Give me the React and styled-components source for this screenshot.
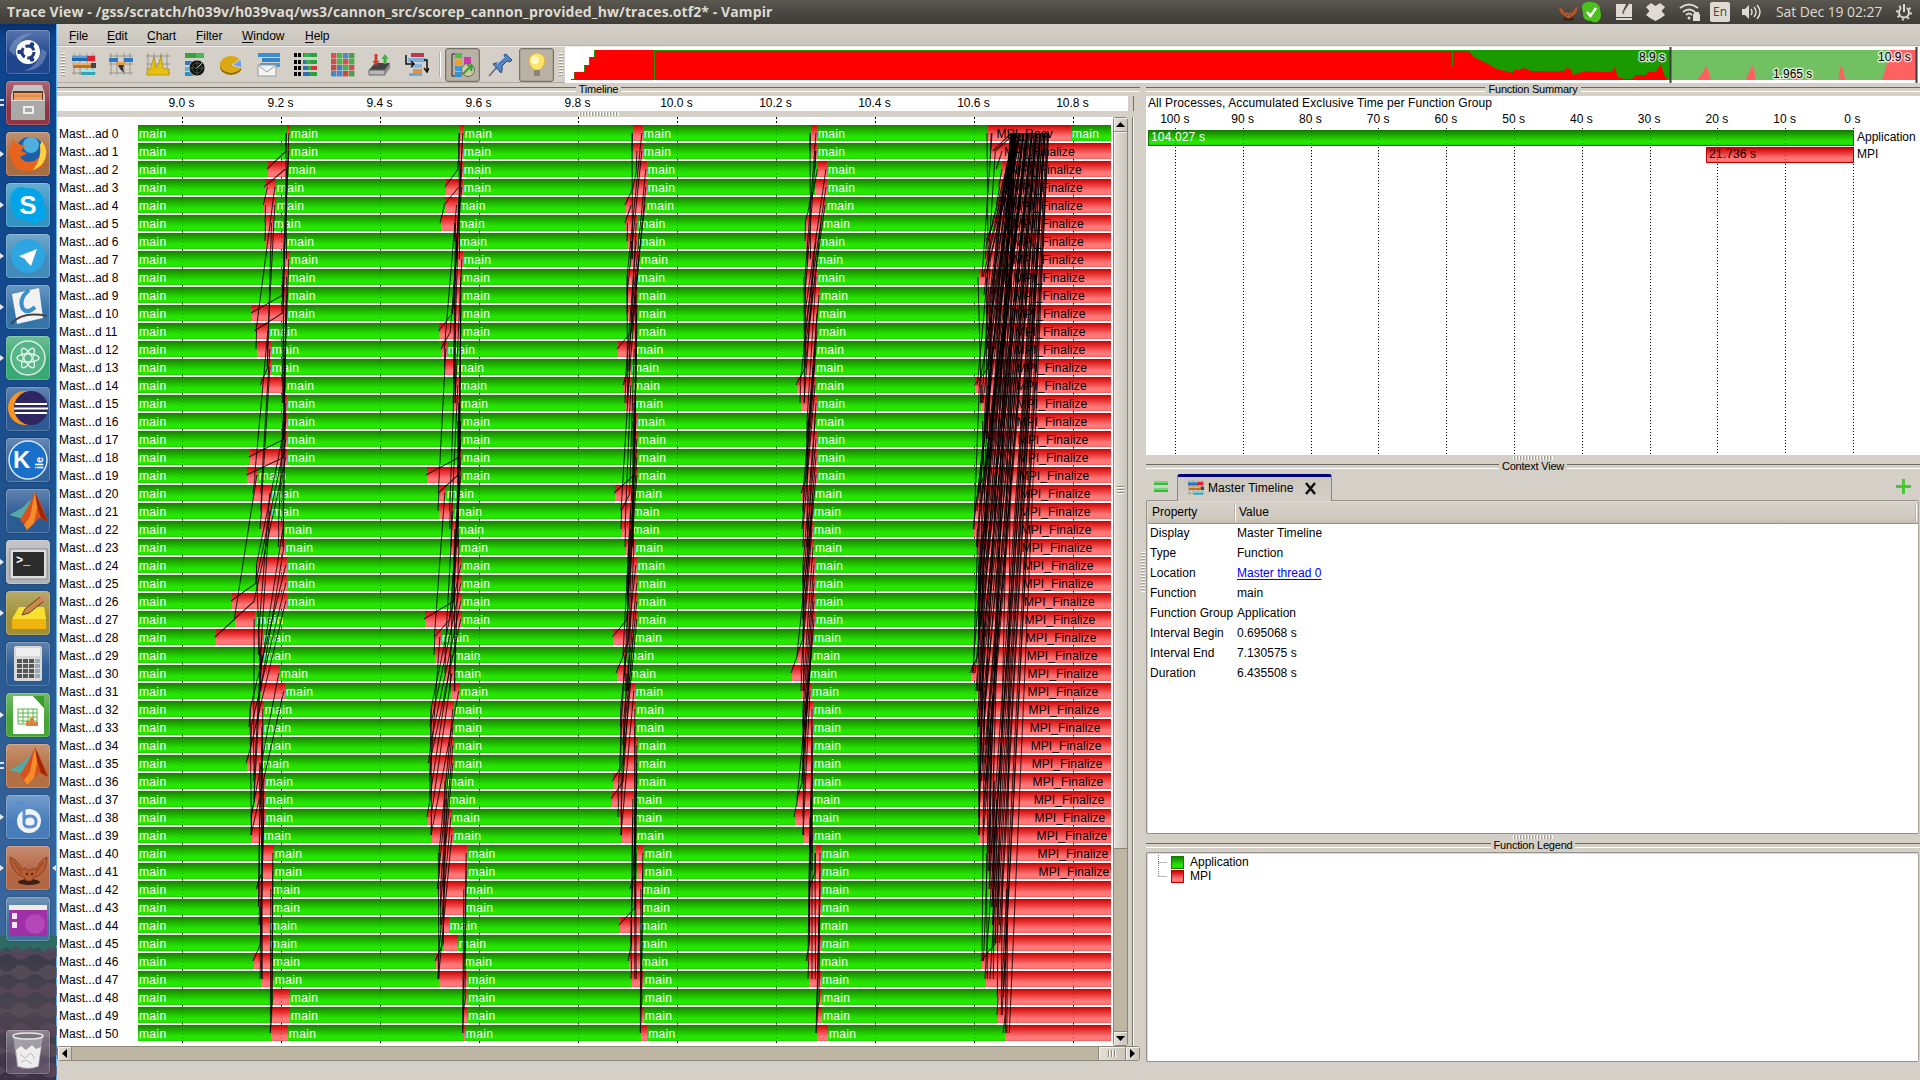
import React from "react";
import styled, { createGlobalStyle, css } from "styled-components";

const Global = createGlobalStyle`
  * { box-sizing: border-box; }
  html, body { margin: 0; padding: 0; }
  body { width: 1920px; height: 1080px; overflow: hidden; background: #d4cfc7;
    font-family: "Liberation Sans", Arial, sans-serif; font-size: 12px; color: #000; }
  svg { display: block; }
`;

/* ---------- trace data ---------- */
const ROWS = 51;
const PLOT_X = 138;
const third = (base, list) => list.map(([s, l]) => [base + s / 3, base + (l - 4.5) / 3]);

const waveA = third(220, [
  [201,214],[200,214],[144,207],[135,172],[133,172],[138,162],[138,202],[197,214],[193,207],[190,207],
  [96,205],[106,151],[111,157],[145,157],[124,202],[190,205],[192,205],[194,205],[90,205],[82,118],
  [102,157],[126,157],[123,196],[178,199],[112,205],[110,205],[36,205],[46,110],[-12,133],[118,133],
  [124,184],[124,199],[93,136],[90,133],[96,133],[81,127],[104,139],[105,139],[96,139],[96,133],
  [128,166],[128,166],[112,160],[118,160],[120,151],[124,151],[102,160],[123,166],[160,214],[157,214],[154,208],
]);
const waveB = third(220, [
  [720,736],[718,733],[716,733],[678,733],[675,717],[663,714],[706,721],[714,733],[708,730],[704,730],
  [700,730],[658,730],[666,685],[676,712],[704,721],[702,724],[722,730],[722,730],[720,730],[621,730],
  [658,682],[657,706],[692,712],[696,724],[706,730],[704,730],[704,730],[615,730],[646,667],[645,702],
  [678,703],[693,724],[636,706],[633,706],[634,706],[628,706],[632,682],[632,687],[624,700],[636,703],
  [658,746],[660,746],[655,739],[664,739],[664,691],[672,718],[648,736],[657,746],[738,746],[732,746],[731,739],
]);
const waveC = third(400, [
  [699,733],[699,733],[712,745],[702,745],[678,742],[678,716],[684,716],[696,724],[684,715],[684,718],
  [684,718],[698,718],[654,710],[690,697],[672,700],[678,709],[702,715],[708,718],[706,718],[704,718],
  [645,706],[666,699],[666,699],[678,709],[686,715],[684,718],[686,718],[684,718],[640,706],[672,682],
  [651,688],[678,709],[665,712],[664,712],[672,718],[672,718],[640,718],[636,706],[657,706],[666,712],
  [710,736],[710,736],[692,730],[708,730],[660,721],[696,721],[687,724],[696,736],[728,736],[725,736],[724,746],
]);
const waveD = Array.from({ length: ROWS }, (_, i) => {
  const s = [811,811,818,815,810,806,806,808,805,806,806,806,806,806,797,801,808,808,808,808,802,804,803,804,804,804,804,804,804,798,792,802,804,804,804,804,803,798,795,804,816,816,810,810,810,810,807,809,820,818,817][i];
  const e = [817,817,827,827,826,822,817,815,817,820,818,818,816,815,816,817,816,817,817,817,814,813,813,814,815,815,815,815,813,812,809,811,813,813,813,813,813,812,811,813,821,821,821,821,820,821,820,821,822,822,828][i];
  return [s, e];
});
const lastStart = [144,154,186,179,172,160,140,139,117,138,142,145,145,147,106,124,138,142,146,133,114,106,102,112,118,119,120,124,118,115,93,112,115,118,124,122,120,120,118,118,142,148,150,158,160,167,126,138,172,174,196].map((v) => 940 + v / 3);
const finalizeX = [172,194,215,218,218,221,221,221,224,224,226,226,226,230,230,232,232,235,235,238,241,241,244,247,250,250,254,256,259,262,265,265,268,271,274,277,280,283,286,292,295,298].map((v) => 940 + (v - 5) / 3);
/* rows whose neighbour message arrives late in the wait interval */
const arrivals = [
  { 2: 286, 3: 268, 10: 283, 18: 285, 19: 255.7, 26: 255 },
  { 3: 459.3, 11: 451.3, 19: 458.6, 27: 450.6 },
  { 4: 631.6, 20: 630.6, 36: 624, 28: 630 },
  {},
];
const waves = [waveA, waveB, waveC, waveD];
const rowY = (i) => 16 + 18 * i;

function messageLines() {
  const out = [];
  const add = (x1, r1, x2, r2) => out.push([x1 - PLOT_X, rowY(r1), x2 - PLOT_X, rowY(r2)]);
  waves.forEach((w, k) => {
    const sender = (i) => (i % 8 === 7 ? i - 7 : i + 1);
    const mid = w.map(([s, e], i) => {
      const from = w[sender(i)];
      return Math.min(e - 1, arrivals[k][i] || Math.max(s, from ? from[0] : s));
    });
    for (let i = 0; i < ROWS; i++) {
      const j = sender(i);
      if (j < ROWS) add(Math.min(w[j][0], mid[i]) - 1, j, mid[i] - 0.5, i);
      if (i + 8 < ROWS) add(Math.min(mid[i + 8], w[i][1]) - 1, i + 8, w[i][1] - 1, i);
    }
  });
  for (let i = 0; i < ROWS; i++) {
    const s = lastStart[i];
    const j = i % 8 === 7 ? i - 7 : i + 1;
    if (j < ROWS) add(Math.min(lastStart[j], s + 6) - 1, j, Math.max(s, lastStart[j]), i);
    if (i + 8 < ROWS) {
      const from = Math.max(lastStart[i + 8], lastStart[Math.min(i + 9, ROWS - 1)] - 4);
      add(from, i + 8, Math.max(s + 4, from + 1), i);
    }
    if (i > 0) {
      const band = i % 2 ? Math.floor(i / 6) * 6 + 3 : i;
      add(s + 4, i, 1013 + band * 0.7, 0);
      if (i % 5 < 2) add(s + 1.5, i, 1010.5 + (i % 8) * 0.8, 0);
      if (i % 4 === 0) add(s + 6, i, 1016 + i * 0.66, 0);
    }
  }
  return out;
}
const LINES = messageLines();
const TICKS = Array.from({ length: 10 }, (_, i) => ({ x: 182.5 + i * 99, label: (9 + i * 0.2).toFixed(1) + " s" }));

/* ---------- styles ---------- */
const greenFill = "linear-gradient(#168200 0%, #1a9600 15%, #20c200 45%, #26e600 72%, #26e600 92%, #20cc00 100%)";
const redFill = "linear-gradient(#cc0000 0%, #d81818 15%, #ee4848 45%, #ff7777 72%, #ff7777 92%, #ee5c5c 100%)";

const Desktop = styled.div`width: 1920px; height: 1080px; display: flex; flex-direction: column; background: #d4cfc7;`;
const TopBar = styled.header`
  height: 24px; flex: none; display: flex; align-items: center; justify-content: space-between;
  padding: 0 8px 0 7px; background: linear-gradient(#5b5850, #4a4842 50%, #3e3d38); color: #dfdbd2;
`;
const WindowTitle = styled.h1`
  margin: 0; font: bold 14px/24px "Open Sans", "Noto Sans", sans-serif; white-space: nowrap; letter-spacing: 0.09px;
`;
const Tray = styled.div`display: flex; align-items: center; height: 24px;`;
const TrayItem = styled.div`width: ${(p) => p.$w}px; margin-right: ${(p) => p.$gap}px; flex: none;`;
const Lang = styled.div`
  width: 20px; height: 20px; margin-right: 12px; border-radius: 2px; background: #dfdbd2; color: #45433d;
  font: 12px/20px "Open Sans", sans-serif; text-align: center;
`;
const Clock = styled.div`width: 107px; margin-right: 13px; font: 14px/24px "Open Sans", sans-serif; letter-spacing: -0.1px; white-space: nowrap;`;

const Body = styled.div`flex: 1; display: flex; min-height: 0;`;
const Launcher = styled.nav`
  width: 57px; flex: none; display: flex; flex-direction: column; align-items: center; padding: 6px 1px 6px 0; gap: 7px;
  border-right: 1px solid #62b4f2; position: relative;
  background: linear-gradient(#07306e 0, #0c448c 14px, #164a8e 300px, #27588f 600px, #3a679d 910px, #2a7068 912px, #2d5f5c 922px, #3c3b4a 930px, #4c4450 990px, #3c3247 1056px);
`;
const Ground = styled.svg`position: absolute; left: 0; bottom: 0;`;
const Tile = styled.div`
  width: 44px; height: 44px; flex: none; border-radius: 4px; position: relative; z-index: 1;
  margin-top: ${(p) => p.$push || "0"};
  background: linear-gradient(rgba(255,255,255,.28), rgba(255,255,255,.04) 60%), ${(p) => p.$bg};
  box-shadow: inset 0 0 0 1px rgba(255,255,255,.22), 0 0 2px rgba(0,0,0,.4);
`;
const Pip = styled.i`
  position: absolute; top: 19px; width: 0; height: 0; border: 3px solid transparent;
  ${(p) => p.$right ? css`right: -6px; border-right: 4px solid #e8e8e8; border-left: 0;` : css`left: -6px; border-left: 4px solid #e8e8e8; border-right: 0;`}
`;
const TwoPips = styled.i`position: absolute; left: -6px; top: 18px; width: 4px; height: 7px; border: solid #dde; border-width: 2px 0;`;

const Workspace = styled.main`flex: 1; display: flex; flex-direction: column; min-width: 0;`;
const MenuBar = styled.div`
  height: 22px; flex: none; display: flex; padding-left: 12px; gap: 18px; line-height: 25px; font-size: 12px;
  background: linear-gradient(#d5d0c9, #cbc6bd); border-bottom: 1px solid #b9b3a8;
`;
const MenuItem = styled.span`letter-spacing: -.05px; width: ${(p) => p.$w}px; white-space: nowrap; u { text-underline-offset: 2px; }`;
const ToolBar = styled.div`height: 37px; flex: none; display: flex; align-items: center; border-top: 1px solid #f2f0ec; border-bottom: 1px solid #b0aca3; padding-left: 4px;`;
const Handle = styled.div`width: 4px; height: 24px; margin-left: ${(p) => p.$ml || 0}px; background: repeating-linear-gradient(#fff 0 1px, #9c978d 1px 2px, #d4cfc7 2px 3px);`;
const Tools = styled.div`display: flex; align-items: center; gap: 13px; width: 370px; padding-left: 7px;`;
const ToolSep = styled.div`width: 2px; height: 25px; margin: 0 4px 0 6px; border-left: 1px solid #b5b0a6; border-right: 1px solid #fff;`;
const ToolBtn = styled.div`
  width: ${(p) => p.$w || 35}px; height: 34px; display: flex; align-items: center; justify-content: center; border-radius: 3px; flex: none;
  ${(p) => p.$on && css`background: #b9b2a4; border: 1px solid #77736a; box-shadow: inset 0 0 0 1px #a8a194;`}
`;
const Overview = styled.div`width: 1355px; height: 36px; margin-left: 2px; background: #fff; flex: none;`;

const Panels = styled.div`flex: 1; display: flex; gap: 6px; min-height: 0; position: relative;`;
const Left = styled.section`width: 1083px; display: flex; flex-direction: column; flex: none;`;
const Right = styled.section`flex: 1; display: flex; flex-direction: column; min-width: 0;`;
const DockTitle = styled.div`
  height: 13px; flex: none; display: flex; align-items: center; gap: 3px; font-size: 11px; line-height: 13px; letter-spacing: -.2px; white-space: nowrap;
  &::before, &::after { content: ""; flex: 1; height: 3px; border-top: 1px solid #6b6862; border-bottom: 1px solid #fff; }
`;
const Axis = styled.div`
  height: 15px; flex: none; width: 1076px; background: #fff; border-right: 5px solid #d4cfc7;
  display: flex; padding-left: 75px; box-shadow: 1px 0 #77736b;
`;
const AxisLabel = styled.span`width: 99px; text-align: center; line-height: 15px; flex: none; white-space: nowrap;`;
const GripRow = styled.div`height: ${(p) => p.$h}px; flex: none; display: flex; justify-content: center; align-items: flex-start; padding-top: 1px;`;
const Grip = styled.div`width: 40px; height: 4px; background: repeating-linear-gradient(90deg, #fff 0 1px, #a39e94 1px 2px, #d4cfc7 2px 3px);`;
const ChartRow = styled.div`height: 929px; flex: none; display: flex; width: 1076px; box-shadow: 1px 0 #fff, inset -1px 0 #77736b;`;
const Chart = styled.div`width: 1056px; background: #fff; position: relative; padding-top: 8px; flex: none;`;
const TraceRow = styled.div`display: flex; height: 16px; margin-bottom: 2px;`;
const RowName = styled.span`width: 81px; padding-left: 2px; line-height: 18px; flex: none; white-space: nowrap;`;
const Track = styled.div`display: flex; width: 973px; overflow: hidden; flex: none;`;
const Seg = styled.div`
  flex: none; height: 16px; line-height: 18px; padding-left: 1px; white-space: nowrap; overflow: visible;
  background: ${(p) => (p.$mpi ? redFill : greenFill)}; color: ${(p) => (p.$mpi ? "#000" : "#fff")};
  letter-spacing: ${(p) => (p.$mpi ? 0.12 : 0.35)}px;
`;
const Overlay = styled.svg`position: absolute; left: 81px; top: 0;`;
const VScroll = styled.div`width: 15px; display: flex; flex-direction: column; background: #bfb6a4; border: 1px solid #8c8779; border-radius: 3px; flex: none;`;
const HScroll = styled.div`height: 15px; display: flex; background: #bfb6a4; border: 1px solid #8c8779; border-radius: 3px; flex: none;`;
const ScrollPart = styled.div`
  width: ${(p) => p.$w}px; height: ${(p) => p.$h}px; display: flex; align-items: center; justify-content: center; flex: none;
  background: linear-gradient(90deg, #e4e0d9, #cbc5b9); box-shadow: inset 1px 1px #f2efea; border: 0 solid #8c8779;
  border-right-width: ${(p) => (p.$r ? 1 : 0)}px; border-left-width: ${(p) => (p.$l ? 1 : 0)}px; border-bottom-width: ${(p) => (p.$b ? 1 : 0)}px; border-top-width: ${(p) => (p.$t ? 1 : 0)}px;
`;
const Trough = styled.div`flex: 1;`;

const Summary = styled.div`height: 359px; flex: none; background: #fff; position: relative; padding: 0 0 0 2px;`;
const SummaryTitle = styled.div`height: 15px; line-height: 14px; letter-spacing: .1px; white-space: nowrap;`;
const SummaryAxis = styled.div`height: 19px; display: flex; margin-left: -7px; line-height: 17px;`;
const SummaryTick = styled.span`width: 67.75px; text-align: center; flex: none;`;
const SummaryBars = styled.div`display: flex; flex-direction: column; gap: 1px;`;
const SummaryRow = styled.div`display: flex; gap: 3px; height: 16px; line-height: 15px;`;
const SummaryTrack = styled.div`width: 706px; display: flex; justify-content: flex-end; flex: none;`;
const SummaryBar = styled.div`
  width: ${(p) => p.$w}px; height: 16px; line-height: 13px; padding-left: 2px; background: ${(p) => (p.$mpi ? redFill : greenFill)};
  color: ${(p) => (p.$mpi ? "#000" : "#fff")}; border: 1px solid ${(p) => (p.$mpi ? "#c00000" : "#127a00")}; letter-spacing: .15px;
`;
const SummaryGrid = styled.svg`position: absolute; left: 0; top: 30px;`;

const Tabs = styled.div`height: 26px; flex: none; display: flex; align-items: flex-end; margin-top: 1px;`;
const TabIcon = styled.div`width: 31px; padding-left: 8px; height: 20px;`;
const Tab = styled.div`
  width: 155px; height: 27px; margin-bottom: -1px; display: flex; align-items: center; gap: 4px; padding: 0 0 2px 10px; position: relative; z-index: 1;
  border: 1px solid #8c8779; border-top: 3px solid #000080; border-bottom: 0; border-radius: 3px 3px 0 0; background: linear-gradient(#cdc7bd, #d4cfc7);
`;
const TabText = styled.span`width: 92px; white-space: nowrap; letter-spacing: .05px;`;
const AddTab = styled.div`margin-left: auto; padding-right: 9px; height: 21px;`;
const Sheet = styled.div`
  height: ${(p) => p.$h}px; flex: none; background: #fff; border: 1px solid #96928a; border-right-color: #a8a49b; box-shadow: inset 1px 1px #dedad3;
  border-radius: 2px; margin-right: 1px; display: flex; flex-direction: column; padding: ${(p) => p.$pad || "1px 0 0 1px"};
`;
const HeadRow = styled.div`
  height: 22px; flex: none; display: grid; grid-template-columns: 87px 1fr; align-items: center;
  background: linear-gradient(#d6d1ca, #d0cac0 75%, #c3bcae); border-bottom: 1px solid #9a9384;
`;
const HeadCell = styled.span`padding-left: 4px; height: 18px; line-height: 17px; border-right: 1px solid #b8b2a6; box-shadow: 1px 0 #fff; &:last-child { margin-right: 2px; }`;
const PropRow = styled.div`height: 20px; display: grid; grid-template-columns: 87px 1fr; line-height: 19px; padding-left: 2px; white-space: nowrap; letter-spacing: .03px;`;
const Link = styled.a`color: #0000ff; text-decoration: underline; text-underline-offset: 2px;`;
const LegendRow = styled.div`display: flex; align-items: center; height: 14px; gap: 6px; padding-left: 10px; line-height: 13px;`;
const Branch = styled.svg`flex: none; margin-right: -5px;`;
const Swatch = styled.i`width: 13px; height: 13px; flex: none; background: ${(p) => (p.$mpi ? redFill : greenFill)}; border: 1px solid ${(p) => (p.$mpi ? "#c00000" : "#127a00")};`;
const SideGrip = styled.div`position: absolute; left: 1084px; top: 469px; width: 4px; height: 40px; background: repeating-linear-gradient(#fff 0 1px, #a39e94 1px 2px, #d4cfc7 2px 3px);`;

/* ---------- drawings ---------- */
const Grid = () => <path d="M2 0V22M8 0V22M15 0V22M21 0V22M0 3H24M0 11H24M0 20H24" stroke="#8d8982" strokeWidth=".8" />;
const R = (x, y, w, h, f) => <rect key={`${x},${y},${f}`} x={x} y={y} width={w} height={h} fill={f} />;
const Ico = ({ children, s = 24 }) => <svg width={s} height={s} viewBox="0 0 24 24" fill="none">{children}</svg>;
const TimelineIcon = ({ s = 24 }) => <Ico s={s}><Grid />{R(0,3,15,5,"#2167ab")}{R(0,3,15,2,"#5aa0dc")}{R(15,3,8,5,"#e02030")}{R(1,10,18,5,"#c07020")}{R(1,10,18,2,"#eab060")}{R(19,10,5,5,"#444")}{R(9,17,14,5,"#35a5b5")}{R(9,17,14,2,"#8fe8ee")}</Ico>;
const ProcIcon = () => <Ico><Grid />{R(0,5,9,4,"#2d78c4")}{R(15,5,9,4,"#2d78c4")}{R(8,9,9,3,"#e5a04a")}<path d="M9 12h6l-1 3 1 5-4-4z" fill="#333" /></Ico>;
const CounterIcon = () => <Ico><Grid /><path d="M1 22V15l3 2 2-7 2-6 2 11 3-5 2-8 2 13 3 1 3 0v6z" fill="#e5c010" stroke="#9c7d00" strokeWidth=".6" /></Ico>;
const RadarIcon = () => <Ico>{R(2,0,11,5,"#3ca040")}{R(13,0,8,5,"#48b850")}{R(2,8,10,4,"#2d78c4")}{R(2,14,7,4,"#60b0d8")}{R(2,19,8,4,"#2c90c0")}<circle cx="14" cy="15" r="8" fill="#111" stroke="#ccc" strokeWidth=".8" /><circle cx="14" cy="15" r="5" stroke="#587858" strokeWidth=".6" /><path d="M14 15L20 9" stroke="#b8d8b8" strokeWidth="1" /><path d="M7 15h14M14 8v14" stroke="#587858" strokeWidth=".6" /></Ico>;
const PieIcon = () => <Ico><ellipse cx="11" cy="13.500" rx="11" ry="8.500" fill="#8f6a00" /><ellipse cx="11" cy="11.500" rx="11" ry="8.500" fill="#dca914" /><path d="M12 12L21 6l1 9z" fill="#6f9ff0" stroke="#eee" strokeWidth=".7" /></Ico>;
const MailIcon = () => <Ico>{R(1,0,22,4,"#3e8fd0")}{R(5,5,18,4,"#3584c8")}{R(3,10,20,4,"#4a9ad8")}<rect x="1" y="12" width="18" height="11" fill="#f4f4f4" stroke="#999" /><path d="M1 12l9 7 9-7" stroke="#999" /></Ico>;
const MatrixIcon = () => <Ico>{[0,7,13,19].map((y, i) => <g key={y}>{R(0,y,3,4,"#000")}{R(4,y,3,4,"#000")}{R(9,y,9,4,"#35b050")}{R(17,y,6,4,i === 2 ? "#e03030" : "#2aa040")}{R(9,y,i * 2 + 1,4,"#3070b0")}</g>)}</Ico>;
const CommIcon = () => <Ico>{["#d85050","#48b848","#5088c8","#48a048","#c85050","#48b848","#d85050","#48b048","#c84848","#4880c0","#48b048","#d05050","#4888c8","#4888c8","#c84848","#48a048"].map((c, i) => R((i % 4) * 6, Math.floor(i / 4) * 6, 5.4, 5.4, c))}</Ico>;
const IoIcon = () => <Ico><path d="M1 17l6-7h15l-5 7z" fill="#444" /><path d="M1 17h16v5H1z" fill="#b8b8b8" stroke="#666" /><path d="M17 17l5-7v5l-5 7z" fill="#888" /><path d="M8 1v8" stroke="#d04030" strokeWidth="3" /><path d="M4.500 8h7L8 13z" fill="#d04030" /><path d="M17 11V5" stroke="#40b040" strokeWidth="3" /><path d="M13.500 6h7L17 1z" fill="#40b040" /></Ico>;
const TreeIcon = () => <Ico>{R(6,0,13,4,"#c03850")}{R(3,5,18,4,"#7ab0d8")}{R(6,11,11,4,"#80b8e0")}{R(8,16,9,4,"#e09040")}{R(4,20,13,3,"#70a8d8")}<path d="M1 2v9h8M19 7h3v11M19 15l3 4 2-4M6 8l3 3-3 3" stroke="#111" strokeWidth="1.500" /></Ico>;
const ClusterIcon = () => <Ico><path d="M4 1H1v22h3M4 11h3" stroke="#222" />{R(4,0,7,5,"#58b848")}{R(4,7,7,5,"#f0a020")}{R(4,13,7,5,"#4098d8")}{R(4,19,7,5,"#3890d0")}{R(13,4,7,7,"#c838a8")}<circle cx="17" cy="17" r="6.500" fill="#cfc8a8" stroke="#6d6a50" /><path d="M12 21l8-8M16 12l5 1-1 5" stroke="#28a828" strokeWidth="2" /></Ico>;
const PinIcon = () => <Ico><path d="M1 23l9-10" stroke="#667" strokeWidth="1.500" /><path d="M5 11q4-2 7-1l5-5-1-3 2-1 6 6-2 2-3-1-5 5q1 4-1 7z" fill="#5584c0" stroke="#2a4c80" /><path d="M9 11l8-7" stroke="#9cc0ea" strokeWidth="1.500" /></Ico>;
const BulbIcon = () => <Ico><path d="M12 0a8 8 0 0 1 8 8q0 4-5 9H9Q4 12 4 8a8 8 0 0 1 8-8z" fill="#ffe36a" stroke="#d8b020" strokeWidth=".8" /><circle cx="10" cy="7" r="4" fill="#fff8c0" />{R(9,17,6,6,"#8a8578")}</Ico>;

const OverviewChart = () => (
  <svg width="1355" height="36" viewBox="565 47 1355 36">
    <path d="M571 80V79h3V72h10v-7h5v-8h5V50H1916V80z" fill="#1b9a00" />
    <path d="M571 80V79h3.500V72H585v-7h5v-8h5V50H654V51H1469L1474 57L1480 60L1488 64L1495 68L1500 70L1506 71L1513 73L1514 70H1519L1523 68L1532 71L1553 71.500L1565 70.500L1566 68L1571 69L1573 75L1578 73L1588 71L1600 72L1612 71.500L1615 67L1617.600 77L1625 79H1632L1636 75H1646L1648 72L1656 71.500L1661 64L1664 75L1667 78V80z" fill="#f00" />
    <path d="M1697 80l6-8 3-6 2 3 3 11zM1745.500 80l4-9 3-6 2 6 1 9zM1791 80l5-6 1.500-10 1 6 2 10zM1838.500 80l2-14 2 2 3 12zM1882 80l1-4 6-18 1-8h26v30z" fill="#f00" />
    <path d="M654.500 50V80M1452.500 50V66" stroke="#1b9a00" />
    <rect x="1671" y="50" width="245" height="30" fill="#fff" opacity=".38" />
    <path d="M1670.500 47V83M1916.500 47V83" stroke="#3d3d3d" strokeWidth="2" />
    <g fontFamily="Liberation Sans" fontSize="12" stroke="#fff" strokeOpacity=".7" strokeWidth="3" paintOrder="stroke" strokeLinejoin="round">
      <text x="1639" y="61">8.9 s</text><text x="1878" y="61">10.9 s</text><text x="1773" y="78">1.965 s</text>
    </g>
  </svg>
);

const Matlab = () => <svg width="44" height="44"><path d="M3 26l13-7 9-9-6 22-5-3z" fill="#55aaa5" /><path d="M14 31l9-15 6-13 5 10 8 19-9-3-7 7-5 5-3-6z" fill="#d8501a" /><path d="M29 3l3 12-4 19-7 7-3-5 6-8z" fill="#ffa030" opacity=".75" /><path d="M29 3l5 12 8 18-7-4-4-12z" fill="#a02808" /></svg>;
const Vampir = () => <svg width="44" height="44"><ellipse cx="23" cy="36" rx="11" ry="3" fill="#3a2015" /><path d="M4 11q8 3 12 13l3-2 4 3 4-3 3 2q4-10 11-13 1 12-9 19l-4 1q-1 4-5 4t-5-4l-5-2Q4 22 4 11z" fill="#b85c32" stroke="#8a4020" /><path d="M8 16l8 12M37 16l-8 12" stroke="#8a4020" /><circle cx="21" cy="28" r="1.200" fill="#5a2010" /><circle cx="26" cy="28" r="1.200" fill="#5a2010" /></svg>;
const icons = [
  ["#173f8c", <svg width="44" height="44"><path d="M3 20Q8 3 29 3Q12 7 9 26M41 22Q38 40 18 41Q34 35 35 19" fill="#8fa3c8" opacity=".5" /><circle cx="22" cy="22" r="12" fill="#fff" /><circle cx="22" cy="22" r="6" fill="none" stroke="#1b3a80" strokeWidth="3" strokeDasharray="10 2.500" /><circle cx="13.500" cy="22" r="2.300" fill="#1b3a80" /><circle cx="26" cy="14.500" r="2.300" fill="#1b3a80" /><circle cx="26" cy="29.500" r="2.300" fill="#1b3a80" /></svg>, 0],
  ["#8c2c3c", <svg width="44" height="44"><path d="M8 4h28l3 10v25H5V14z" fill="#c4c4c2" /><rect x="7" y="10" width="30" height="10" fill="#6b3a20" /><path d="M8 12h28v8H8z" fill="#f0a060" /><path d="M8 15h28" stroke="#c87838" /><rect x="5" y="19" width="34" height="20" fill="#a9a9a7" /><path d="M5 19.500h34" stroke="#ddd" /><rect x="18" y="26" width="9" height="6" fill="none" stroke="#eee" strokeWidth="2" /></svg>, 2],
  ["#a5673c", <svg width="44" height="44"><circle cx="24" cy="20" r="15" fill="#1d5fa8" /><circle cx="25" cy="13" r="8" fill="#4fb0e0" /><path d="M7 7Q2 18 5 27Q9 39 22 39Q37 39 40 25Q42 15 37 9Q38 24 28 29Q17 32 14 24Q18 25 21 21L15 19Q17 15 20 14Q14 13 12 11Q8 10 7 7z" fill="#e8641c" /><path d="M36 9Q44 20 37 31Q33 36 27 38Q36 27 34 13z" fill="#ffd040" /></svg>, 1],
  ["#2b8fc0", <svg width="44" height="44"><path d="M6 10Q10 2 20 5Q38 5 38 22Q44 36 32 39Q26 42 20 37Q5 36 6 22Q3 16 6 10" fill="#00a4e8" /><text x="22" y="31" textAnchor="middle" fontFamily="Liberation Sans" fontWeight="bold" fontSize="26" fill="#fff">S</text></svg>, 1],
  ["#3a86b8", <svg width="44" height="44"><circle cx="22" cy="22" r="17" fill="#2ca5e0" /><path d="M13 22l18-7-6 17-4-4-2-3z" fill="#fff" /></svg>, 1],
  ["#2c6fa8", <svg width="44" height="44"><path d="M6 9l27-6 4 30-26 6z" fill="#f2f2f2" /><path d="M23 5Q12 14 17 24Q22 29 29 22" fill="none" stroke="#3c8fc8" strokeWidth="4" /><path d="M5 39Q16 26 41 31" fill="none" stroke="#444" strokeWidth="2" /></svg>, 1],
  ["#2fa56c", <svg width="44" height="44"><circle cx="22" cy="22" r="17" fill="#57b58a" stroke="#d8efe0" strokeWidth="1.500" /><g fill="none" stroke="#e8f8f0" strokeWidth="1.300"><ellipse cx="22" cy="22" rx="11" ry="4" /><ellipse cx="22" cy="22" rx="11" ry="4" transform="rotate(60 22 22)" /><ellipse cx="22" cy="22" rx="11" ry="4" transform="rotate(120 22 22)" /></g></svg>, 1],
  ["#24548f", <svg width="44" height="44"><circle cx="19" cy="21" r="17" fill="#f7941e" /><circle cx="25" cy="21" r="17" fill="#2f2560" /><path d="M9 17h32M8 21.500h34M9 26h32" stroke="#fff" strokeWidth="2" /></svg>, 0],
  ["#2a5c98", <svg width="44" height="44"><circle cx="22" cy="22" r="19" fill="#1a6fc8" stroke="#d8e8f8" strokeWidth="1.500" /><text x="7" y="30" fontFamily="Liberation Sans" fontWeight="bold" fontSize="24" fill="#fff">K</text><text transform="translate(37 31) rotate(-90)" fontFamily="Liberation Sans" fontWeight="bold" fontSize="11" fill="#fff">ile</text></svg>, 0],
  ["#24548f", <Matlab />, 0],
  ["#aeb0b4", <svg width="44" height="44"><rect x="4" y="9" width="37" height="30" fill="#ddd" stroke="#888" /><rect x="7" y="12" width="31" height="24" fill="#2c2c2c" /><text x="10" y="24" fontFamily="Liberation Mono" fontWeight="bold" fontSize="12" fill="#fff">&gt;_</text></svg>, 1],
  ["#9c8a30", <svg width="44" height="44"><path d="M6 29l7-13h25l2 13v9H6z" fill="#f0b410" /><path d="M6 28l7-12h25l2 12z" fill="#f8e030" /><path d="M16 24l3-6 15-12 4 4-15 12z" fill="#c88a48" stroke="#604020" /><path d="M34 6l3-1 2 4-2 2z" fill="#e08080" /></svg>, 1],
  ["#24548f", <svg width="44" height="44"><rect x="8" y="4" width="28" height="35" rx="2" fill="#d8d8d6" /><rect x="10" y="6" width="24" height="8" fill="#eee" />{[0,1,2,3].map((r) => [0,1,2,3].map((c) => <rect key={`${r}${c}`} x={11 + c * 6} y={17 + r * 5} width="5" height="4" fill={c === 3 ? "#9ab" : "#555"} />))}</svg>, 0],
  ["#3fa02f", <svg width="44" height="44"><path d="M7 3h20l11 12v26H7z" fill="#fff" /><path d="M27 3h11v12z" fill="#38a028" /><g stroke="#58b848" fill="none"><rect x="12" y="16" width="19" height="15" /><path d="M12 20h19M12 24h19M12 28h19M17 16v15M22 16v15M27 16v15" /></g><path d="M20 33v-5h4v5M24 33v-8h4v8M28 33v-4h4v4" fill="#e08040" /></svg>, 1],
  ["#b06a3c", <Matlab />, 2],
  ["#3f78b8", <svg width="44" height="44"><circle cx="23" cy="26" r="12" fill="#f0f4f8" /><path d="M8 11q9-7 10 0v17q0 4 6 4t6-5q0-6-6-6-5 0-6 4" fill="none" stroke="#5a90d0" strokeWidth="3" /></svg>, 1],
  ["#b0603c", <Vampir />, 3],
  ["#3a6a98", <svg width="44" height="44"><rect x="3" y="8" width="38" height="31" rx="2" fill="#a030a8" /><circle cx="29" cy="27" r="10" fill="#c860c8" opacity=".5" /><rect x="3" y="8" width="38" height="5" fill="#f0ece0" /><rect x="6" y="16" width="5" height="6" fill="#f4e8f8" /><rect x="6" y="25" width="5" height="6" fill="#f4e8f8" /></svg>, 0],
];

const Arrow = ({ d }) => <svg width="9" height="9" viewBox="0 0 9 9"><path d={d} fill="#000" /></svg>;

function Row({ i }) {
  const parts = [];
  let x = PLOT_X;
  waves.forEach((w) => {
    parts.push([0, w[i][0] - x, "main"]);
    parts.push([1, w[i][1] - w[i][0], ""]);
    x = w[i][1];
  });
  parts.push([0, lastStart[i] - x, "main"]);
  x = lastStart[i];
  if (i === 0) {
    parts.push([1, finalizeX[0] - x, ""], [1, 1071 - finalizeX[0], "MPI_Recv"], [0, 40.4, "main"]);
  } else if (finalizeX[i]) {
    parts.push([1, finalizeX[i] - x, ""], [1, 1111.3 - finalizeX[i], "MPI_Finalize"]);
  } else parts.push([1, 1111.3 - x, ""]);
  return (
    <TraceRow>
      <RowName>{`Mast...${i < 10 ? "ad" : "d"} ${i}`}</RowName>
      <Track>{parts.map(([m, w, t], k) => <Seg key={k} $mpi={!!m} style={{ width: w }}>{t}</Seg>)}</Track>
    </TraceRow>
  );
}

const MENU = [["File", 20], ["Edit", 22], ["Chart", 31], ["Filter", 28], ["Window", 45], ["Help", 26]];
const PROPS = [["Display", "Master Timeline"], ["Type", "Function"], ["Location", "Master thread 0"], ["Function", "main"], ["Function Group", "Application"], ["Interval Begin", "0.695068 s"], ["Interval End", "7.130575 s"], ["Duration", "6.435508 s"]];

export default function App() {
  return (
    <Desktop>
      <Global />
      <TopBar>
        <WindowTitle>Trace View - /gss/scratch/h039v/h039vaq/ws3/cannon_src/scorep_cannon_provided_hw/traces.otf2* - Vampir</WindowTitle>
        <Tray>
          <TrayItem $w={22} $gap={2}><svg width="22" height="22" viewBox="0 0 44 44"><Vampir /></svg></TrayItem>
          <TrayItem $w={21} $gap={14}><svg width="21" height="22"><path d="M2 3Q6 0 10 1Q19 1 19 9Q22 18 16 21Q12 22 10 20Q1 20 2 11Q0 6 2 3" fill="#4cc01c" /><path d="M6 11l3.500 4L15 7" stroke="#fff" strokeWidth="2.500" fill="none" /></svg></TrayItem>
          <TrayItem $w={16} $gap={14}><svg width="17" height="18"><path d="M0 1h10l-4 9 2 1 6-10h2v13H0z" fill="#dfdbd2" /><path d="M0 15h16v2H0z" fill="#dfdbd2" /><path d="M8 10l6-9" stroke="#dfdbd2" strokeWidth="1.500" /></svg></TrayItem>
          <TrayItem $w={19} $gap={14}><svg width="19" height="18"><path d="M5 0l4.500 3L14 0l5 4-3.500 4L19 12l-4 3-5.500 3L4 15l-4-3 3.500-4L0 4z" fill="#dfdbd2" /></svg></TrayItem>
          <TrayItem $w={21} $gap={10}><svg width="21" height="18"><path d="M1 5Q10-2 19 5M4 9q6-5 12 0M7 12q3-3 6 0" fill="none" stroke="#dfdbd2" strokeWidth="1.800" /><circle cx="10" cy="15" r="1.500" fill="#dfdbd2" /><path d="M14 11h7v7h-7zM15 11V9h5v2" fill="#dfdbd2" /></svg></TrayItem>
          <Lang>En</Lang>
          <TrayItem $w={20} $gap={14}><svg width="20" height="16"><path d="M0 5h3l4-4v14l-4-4H0z" fill="#dfdbd2" /><path d="M9 5q2 3 0 6M12 3q4 5 0 10M15 1q6 7 0 14" fill="none" stroke="#dfdbd2" strokeWidth="1.500" /></svg></TrayItem>
          <Clock>Sat Dec 19 02:27</Clock>
          <TrayItem $w={16} $gap={0}><svg width="16" height="18"><circle cx="8" cy="9.500" r="5" fill="none" stroke="#dfdbd2" strokeWidth="2" /><circle cx="8" cy="9.500" r="7" fill="none" stroke="#dfdbd2" strokeWidth="2" strokeDasharray="2 3.500" /><path d="M8 0v9" stroke="#4a4842" strokeWidth="5" /><path d="M8 1v8" stroke="#dfdbd2" strokeWidth="2" /></svg></TrayItem>
        </Tray>
      </TopBar>
      <Body>
        <Launcher>
          <Ground width="57" height="146">{[14, 34, 52, 72, 92, 112, 132].map((y, i) => <path key={y} d={`M0 ${y}q7 7 14 0t14 0t14 0t15 0v9q-8 6-15 0t-14 0t-14 0t-14 0z`} fill={i % 2 ? "#5a5058" : "#5c4a5c"} opacity=".7" />)}<path d="M0 2h57v9l-4 5-4-4-5 6-5-5-5 3-6-4-6 5-6-6-5 5-5-3-6 3z" fill="#2c6a62" /></Ground>
          {icons.map(([bg, el, pip], i) => (
            <Tile key={i} $bg={bg}>
              {el}
              {(pip === 1 || pip === 3) && <Pip />}
              {pip === 3 && <Pip $right />}
              {pip === 2 && <TwoPips />}
            </Tile>
          ))}
          <Tile $bg="rgba(120,110,130,.35)" $push="auto">
            <svg width="44" height="44"><path d="M7 5h30l-4 32q-11 4-22 0z" fill="#c8c8cc" opacity=".55" /><ellipse cx="22" cy="6" rx="15" ry="3" fill="#77757c" stroke="#e8e8e8" strokeWidth="1.500" /><path d="M10 20l5-4 5 4 6-5 4 4 5-2-3 19q-9 4-20 0z" fill="#eee" /><path d="M14 24l5 4 6-5 4 6M15 32l5-2 6 4" stroke="#bbb" fill="none" /></svg>
          </Tile>
        </Launcher>
        <Workspace>
          <MenuBar>{MENU.map(([m, w]) => <MenuItem key={m} $w={w}><u>{m[0]}</u>{m.slice(1)}</MenuItem>)}</MenuBar>
          <ToolBar>
            <Handle />
            <Tools><TimelineIcon /><ProcIcon /><CounterIcon /><RadarIcon /><PieIcon /><MailIcon /><MatrixIcon /><CommIcon /><IoIcon /><TreeIcon /></Tools>
            <ToolSep />
            <ToolBtn $on><ClusterIcon /></ToolBtn>
            <ToolBtn $w={39}><PinIcon /></ToolBtn>
            <ToolBtn $on><BulbIcon /></ToolBtn>
            <Handle $ml={5} />
            <Overview><OverviewChart /></Overview>
          </ToolBar>
          <Panels>
            <Left>
              <DockTitle>Timeline</DockTitle>
              <Axis>{TICKS.map((t) => <AxisLabel key={t.label}>{t.label}</AxisLabel>)}</Axis>
              <GripRow $h={6}><Grip /></GripRow>
              <ChartRow>
                <Chart>
                  {Array.from({ length: ROWS }, (_, i) => <Row key={i} i={i} />)}
                  <Overlay width="974" height="928">
                    {TICKS.map((t) => (
                      <g key={t.label} stroke="#000">
                        <path d={`M${t.x - PLOT_X} 0V928`} strokeDasharray="1 3" opacity=".32" />
                        <path d={`M${t.x - PLOT_X} 0V8M${t.x - PLOT_X} 924V928`} strokeDasharray="2 2" />
                        <path d={`M${t.x - PLOT_X} 24V924`} strokeDasharray="1.500 16.500" />
                      </g>
                    ))}
                    <g stroke="#000" strokeWidth="1.050" strokeOpacity=".78">
                      {LINES.map(([a, b, c, d], k) => <line key={k} x1={a} y1={b} x2={c} y2={d} />)}
                    </g>
                  </Overlay>
                </Chart>
                <VScroll>
                  <ScrollPart $w={13} $h={14} $b><Arrow d="M0 7L4.500 2L9 7z" /></ScrollPart>
                  <ScrollPart $w={13} $h={717} $b><svg width="7" height="8"><path d="M0 .5h7M0 3.500h7M0 6.500h7" stroke="#8c8779" /><path d="M0 1.500h7M0 4.500h7M0 7.500h7" stroke="#fff" /></svg></ScrollPart>
                  <Trough />
                  <ScrollPart $w={13} $h={14} $t><Arrow d="M0 2L4.500 7L9 2z" /></ScrollPart>
                </VScroll>
              </ChartRow>
              <HScroll>
                <ScrollPart $w={14} $h={13} $r><Arrow d="M7 0L2 4.500L7 9z" /></ScrollPart>
                <Trough />
                <ScrollPart $w={27} $h={13} $l><svg width="8" height="7"><path d="M.5 0v7M3.500 0v7M6.500 0v7" stroke="#8c8779" /><path d="M1.500 0v7M4.500 0v7M7.500 0v7" stroke="#fff" /></svg></ScrollPart>
                <ScrollPart $w={14} $h={13} $l><Arrow d="M2 0L7 4.500L2 9z" /></ScrollPart>
              </HScroll>
            </Left>
            <Right>
              <DockTitle>Function Summary</DockTitle>
              <Summary>
                <SummaryTitle>All Processes, Accumulated Exclusive Time per Function Group</SummaryTitle>
                <SummaryAxis>{[100, 90, 80, 70, 60, 50, 40, 30, 20, 10, 0].map((v) => <SummaryTick key={v}>{v} s</SummaryTick>)}</SummaryAxis>
                <SummaryBars>
                  <SummaryRow><SummaryTrack><SummaryBar $w={706}>104.027 s</SummaryBar></SummaryTrack>Application</SummaryRow>
                  <SummaryRow><SummaryTrack><SummaryBar $w={148} $mpi>21.736 s</SummaryBar></SummaryTrack>MPI</SummaryRow>
                </SummaryBars>
                <SummaryGrid width="774" height="329">
                  {Array.from({ length: 11 }, (_, i) => {
                    const x = Math.round(29 + i * 67.8) + 0.5;
                    return <g key={i} stroke="#000"><path d={`M${x} 2V4M${x} ${i < 8 ? 21 : 38}V329`} strokeDasharray="1 2" /><path d={`M${x} 5V38`} strokeDasharray="1 3" opacity=".35" /></g>;
                  })}
                </SummaryGrid>
              </Summary>
              <GripRow $h={5}><Grip /></GripRow>
              <DockTitle>Context View</DockTitle>
              <Tabs>
                <TabIcon><svg width="14" height="14"><path d="M0 1h14v4H0zM0 8h14v4H0z" fill="#38b838" /><path d="M0 1h14v2H0zM0 8h14v2H0z" fill="#70d870" /></svg></TabIcon>
                <Tab><TimelineIcon s={16} /><TabText>Master Timeline</TabText><svg width="13" height="13"><path d="M2 1l9 11M11 1L2 12" stroke="#111" strokeWidth="2.500" /></svg></Tab>
                <AddTab><svg width="15" height="15"><path d="M7.500 0v15M0 7.500h15" stroke="#48c838" strokeWidth="3" /></svg></AddTab>
              </Tabs>
              <Sheet $h={334}>
                <HeadRow><HeadCell>Property</HeadCell><HeadCell>Value</HeadCell></HeadRow>
                {PROPS.map(([k, v]) => <PropRow key={k}><span>{k}</span>{k === "Location" ? <span><Link>{v}</Link></span> : <span>{v}</span>}</PropRow>)}
              </Sheet>
              <GripRow $h={5}><Grip /></GripRow>
              <DockTitle>Function Legend</DockTitle>
              <Sheet $h={210} $pad="2px 0 0 1px">
                <LegendRow><Branch width="12" height="14"><path d="M.5 0V14M.5 7.500H9" stroke="#777" strokeDasharray="1 1" /></Branch><Swatch />Application</LegendRow>
                <LegendRow><Branch width="12" height="14"><path d="M.5 0V7M.5 7.500H9" stroke="#777" strokeDasharray="1 1" /></Branch><Swatch $mpi />MPI</LegendRow>
              </Sheet>
            </Right>
            <SideGrip />
          </Panels>
        </Workspace>
      </Body>
    </Desktop>
  );
}
